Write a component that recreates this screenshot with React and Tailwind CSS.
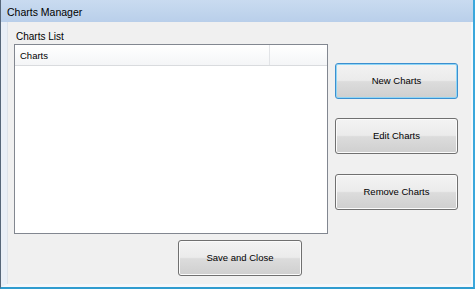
export default function App() {
  const btn =
    "flex items-center justify-center h-[36px] w-[123px] rounded-[3px] border text-[9.5px] text-black bg-[linear-gradient(to_bottom,#f3f3f3_0%,#ebebeb_48%,#dcdcdc_52%,#cfcfcf_100%)]";
  return (
    <div
      className="w-[475px] h-[289px] flex flex-col bg-[#f0f0f0] border-l border-l-[#56677a] border-r-[2px] border-r-[#3aa7dc] border-b-[2px] border-b-[#2f9ccf] overflow-hidden"
      style={{ fontFamily: '"Liberation Sans", Arial, sans-serif' }}
    >
      <div className="h-[22px] shrink-0 flex items-center pl-[6px] pt-[3px] text-[10.5px] text-black bg-[linear-gradient(to_bottom,#c9dbf0,#b9cfea)]">
        Charts Manager
      </div>
      <div className="flex-1 flex flex-col border-l-[6px] border-l-[#e9eff7] border-r-[2px] border-r-[#f6f8fb] border-b-[3px] border-b-[#f4f7fb]">
        <div className="flex-1 flex flex-col border-l border-l-[#dde3ea] pt-[8px]">
          <div className="flex">
            <div className="ml-[6px] w-[314px] flex flex-col">
              <div className="h-[14px] leading-[14px] pl-[2px] text-[10px] text-black">
                Charts List
              </div>
              <div className="h-[190px] border border-[#828790] bg-white flex flex-col">
                <div className="h-[21px] flex border-b border-b-[#d9dbde] bg-[linear-gradient(to_bottom,#ffffff,#f4f5f7)]">
                  <div className="w-[255px] flex items-center pl-[5px] pt-[3px] text-[9.5px] text-black border-r border-r-[#e2e4e7]">
                    Charts
                  </div>
                  <div className="flex-1" />
                </div>
              </div>
            </div>
            <div className="ml-[7px] pt-[33px] flex flex-col">
              <div
                className={
                  btn +
                  " border-[#3c8fcf] shadow-[inset_0_0_0_1px_#8fd6f6]"
                }
              >
                New Charts
              </div>
              <div
                className={
                  btn +
                  " mt-[19px] border-[#707070] shadow-[inset_0_0_0_1px_#fbfbfb]"
                }
              >
                Edit Charts
              </div>
              <div
                className={
                  btn +
                  " mt-[20px] border-[#707070] shadow-[inset_0_0_0_1px_#fbfbfb]"
                }
              >
                Remove Charts
              </div>
            </div>
          </div>
          <div className="flex mt-[6px]">
            <div
              className={
                btn +
                " ml-[170px] w-[124px] border-[#707070] shadow-[inset_0_0_0_1px_#fbfbfb]"
              }
            >
              Save and Close
            </div>
          </div>
        </div>
      </div>
    </div>
  );
}
